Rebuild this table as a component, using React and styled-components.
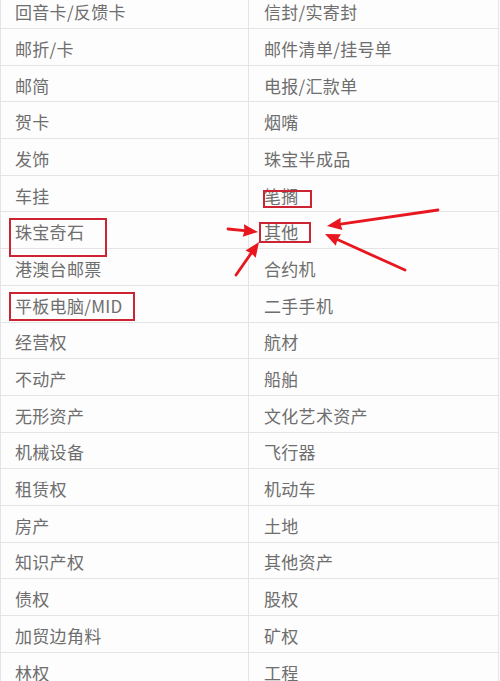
import React from "react";
import styled, { createGlobalStyle } from "styled-components";

const GlobalStyle = createGlobalStyle`
  html, body {
    margin: 0;
    padding: 0;
    background: #ffffff;
  }
`;

const rows = [
  ["回音卡/反馈卡", "信封/实寄封"],
  ["邮折/卡", "邮件清单/挂号单"],
  ["邮简", "电报/汇款单"],
  ["贺卡", "烟嘴"],
  ["发饰", "珠宝半成品"],
  ["车挂", "笔搁"],
  ["珠宝奇石", "其他"],
  ["港澳台邮票", "合约机"],
  ["平板电脑/MID", "二手手机"],
  ["经营权", "航材"],
  ["不动产", "船舶"],
  ["无形资产", "文化艺术资产"],
  ["机械设备", "飞行器"],
  ["租赁权", "机动车"],
  ["房产", "土地"],
  ["知识产权", "其他资产"],
  ["债权", "股权"],
  ["加贸边角料", "矿权"],
  ["林权", "工程"],
];

const marks = [
  { x: 9, y: 218, w: 98, h: 39 },
  { x: 9, y: 292, w: 126, h: 29 },
  { x: 263, y: 190, w: 49, h: 18 },
  { x: 259, y: 222, w: 52, h: 21 },
];

const arrows = [
  { x1: 228, y1: 229, x2: 258, y2: 232 },
  { x1: 236, y1: 275, x2: 259, y2: 242 },
  { x1: 438, y1: 210, x2: 327, y2: 226 },
  { x1: 405, y1: 270, x2: 325, y2: 234 },
];

const Page = styled.div`
  position: relative;
  width: 500px;
  height: 681px;
  overflow: hidden;
  background: #fdfdfd;
  font-family: "Noto Sans CJK SC", "Noto Sans", sans-serif;
`;

const Table = styled.div`
  width: 497px;
  margin-top: -7.7px;
  border-left: 1px solid #e4e4e4;
  border-right: 1px solid #e4e4e4;
`;

const Row = styled.div`
  display: grid;
  grid-template-columns: 247px 1fr;
  height: 36.7px;
  box-sizing: border-box;
  border-bottom: 1.5px solid #e4e4e4;
`;

const Cell = styled.div`
  display: flex;
  align-items: center;
  padding: 3px 0 0 ${(p) => (p.$right ? 15 : 14)}px;
  font-size: 17px;
  color: #6e6e6e;
  letter-spacing: 0.3px;
  white-space: nowrap;
  border-left: ${(p) => (p.$right ? "1.5px solid #e4e4e4" : "none")};
`;

const Mark = styled.div`
  position: absolute;
  left: ${(p) => p.$x}px;
  top: ${(p) => p.$y}px;
  width: ${(p) => p.$w}px;
  height: ${(p) => p.$h}px;
  box-sizing: border-box;
  border: 2px solid #cc2433;
  pointer-events: none;
`;

const Arrows = styled.svg`
  position: absolute;
  left: 0;
  top: 0;
  pointer-events: none;
`;

function Arrow({ x1, y1, x2, y2 }) {
  const a = Math.atan2(y2 - y1, x2 - x1);
  const len = 16;
  const spread = 0.4;
  const bx = x2 - Math.cos(a) * len * 0.85;
  const by = y2 - Math.sin(a) * len * 0.85;
  const p1 = [x2 - Math.cos(a - spread) * len, y2 - Math.sin(a - spread) * len];
  const p2 = [x2 - Math.cos(a + spread) * len, y2 - Math.sin(a + spread) * len];
  return (
    <g>
      <line x1={x1} y1={y1} x2={bx} y2={by} stroke="#e8161f" strokeWidth="2.8" strokeLinecap="round" />
      <polygon points={`${x2},${y2} ${p1[0]},${p1[1]} ${bx},${by} ${p2[0]},${p2[1]}`} fill="#e8161f" />
    </g>
  );
}

export default function App() {
  return (
    <Page>
      <GlobalStyle />
      <Table>
        {rows.map(([a, b]) => (
          <Row key={a}>
            <Cell>{a}</Cell>
            <Cell $right>{b}</Cell>
          </Row>
        ))}
      </Table>
      {marks.map((m, i) => (
        <Mark key={i} $x={m.x} $y={m.y} $w={m.w} $h={m.h} />
      ))}
      <Arrows width="500" height="681">
        {arrows.map((a, i) => (
          <Arrow key={i} {...a} />
        ))}
      </Arrows>
    </Page>
  );
}
